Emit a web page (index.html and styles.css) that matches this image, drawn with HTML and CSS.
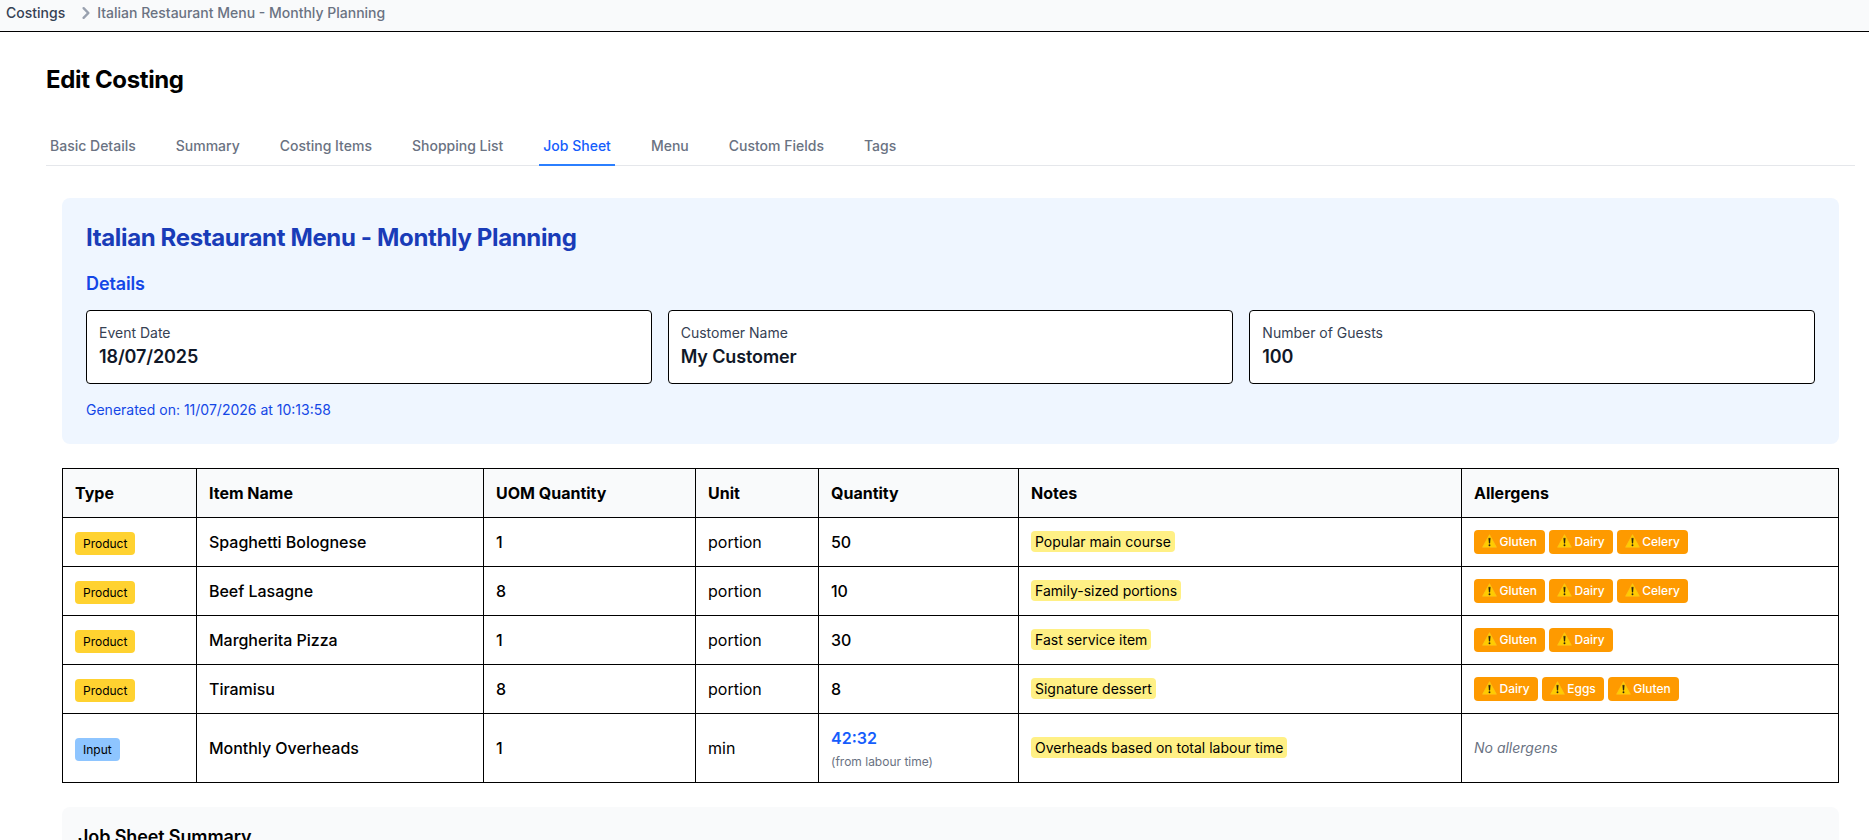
FILE: index.html
```html
<!DOCTYPE html>
<html lang="en">
<head>
    <meta charset="UTF-8">
    <meta name="viewport" content="width=device-width, initial-scale=1.0">
    <title>Edit Costing</title>
    <link rel="stylesheet" href="styles.css">
</head>
<body>
    <svg class="sprite" aria-hidden="true">
        <symbol id="warning" viewBox="0 0 15 14">
            <path d="M7.5 0.6 L14.5 13.3 H0.5 Z" fill="#ffcc00" stroke="#fcc21b" stroke-width="0.6" stroke-linejoin="round"/>
            <path d="M6.7 4.2 H8.3 L7.9 9.2 H7.1 Z" fill="#2b2412" stroke="#2b2412" stroke-width="0.4" stroke-linejoin="round"/>
            <circle cx="7.5" cy="11.2" r="0.95" fill="#2b2412"/>
        </symbol>
    </svg>

    <nav class="breadcrumb">
        <a href="#">Costings</a>
        <svg class="chevron" viewBox="0 0 20 20" fill="currentColor">
            <path fill-rule="evenodd" clip-rule="evenodd" d="M7.293 14.707a1 1 0 010-1.414L10.586 10 7.293 6.707a1 1 0 011.414-1.414l4 4a1 1 0 010 1.414l-4 4a1 1 0 01-1.414 0z"/>
        </svg>
        <span>Italian Restaurant Menu - Monthly Planning</span>
    </nav>

    <main>
        <h1>Edit Costing</h1>

        <div class="tabs">
            <a href="#">Basic Details</a>
            <a href="#">Summary</a>
            <a href="#">Costing Items</a>
            <a href="#">Shopping List</a>
            <a href="#" class="active">Job Sheet</a>
            <a href="#">Menu</a>
            <a href="#">Custom Fields</a>
            <a href="#">Tags</a>
        </div>

        <div class="content">
            <section class="job-header">
                <h2>Italian Restaurant Menu - Monthly Planning</h2>
                <h3>Details</h3>
                <div class="details">
                    <div class="detail-card">
                        <div class="label">Event Date</div>
                        <div class="value">18/07/2025</div>
                    </div>
                    <div class="detail-card">
                        <div class="label">Customer Name</div>
                        <div class="value">My Customer</div>
                    </div>
                    <div class="detail-card">
                        <div class="label">Number of Guests</div>
                        <div class="value">100</div>
                    </div>
                </div>
                <p class="generated">Generated on: 11/07/2026 at 10:13:58</p>
            </section>

            <table>
                <colgroup>
                    <col class="col-type">
                    <col class="col-name">
                    <col class="col-uom">
                    <col class="col-unit">
                    <col class="col-qty">
                    <col class="col-notes">
                    <col class="col-allergens">
                </colgroup>
                <thead>
                    <tr>
                        <th>Type</th>
                        <th>Item Name</th>
                        <th>UOM Quantity</th>
                        <th>Unit</th>
                        <th>Quantity</th>
                        <th>Notes</th>
                        <th>Allergens</th>
                    </tr>
                </thead>
                <tbody>
                    <tr>
                        <td><span class="badge product">Product</span></td>
                        <td class="medium">Spaghetti Bolognese</td>
                        <td class="medium">1</td>
                        <td>portion</td>
                        <td class="medium">50</td>
                        <td><div class="note"><span>Popular main course</span></div></td>
                        <td>
                            <div class="allergens">
                                <span class="allergen"><svg><use href="#warning"/></svg> Gluten</span>
                                <span class="allergen"><svg><use href="#warning"/></svg> Dairy</span>
                                <span class="allergen"><svg><use href="#warning"/></svg> Celery</span>
                            </div>
                        </td>
                    </tr>
                    <tr>
                        <td><span class="badge product">Product</span></td>
                        <td class="medium">Beef Lasagne</td>
                        <td class="medium">8</td>
                        <td>portion</td>
                        <td class="medium">10</td>
                        <td><div class="note"><span>Family-sized portions</span></div></td>
                        <td>
                            <div class="allergens">
                                <span class="allergen"><svg><use href="#warning"/></svg> Gluten</span>
                                <span class="allergen"><svg><use href="#warning"/></svg> Dairy</span>
                                <span class="allergen"><svg><use href="#warning"/></svg> Celery</span>
                            </div>
                        </td>
                    </tr>
                    <tr>
                        <td><span class="badge product">Product</span></td>
                        <td class="medium">Margherita Pizza</td>
                        <td class="medium">1</td>
                        <td>portion</td>
                        <td class="medium">30</td>
                        <td><div class="note"><span>Fast service item</span></div></td>
                        <td>
                            <div class="allergens">
                                <span class="allergen"><svg><use href="#warning"/></svg> Gluten</span>
                                <span class="allergen"><svg><use href="#warning"/></svg> Dairy</span>
                            </div>
                        </td>
                    </tr>
                    <tr>
                        <td><span class="badge product">Product</span></td>
                        <td class="medium">Tiramisu</td>
                        <td class="medium">8</td>
                        <td>portion</td>
                        <td class="medium">8</td>
                        <td><div class="note"><span>Signature dessert</span></div></td>
                        <td>
                            <div class="allergens">
                                <span class="allergen"><svg><use href="#warning"/></svg> Dairy</span>
                                <span class="allergen"><svg><use href="#warning"/></svg> Eggs</span>
                                <span class="allergen"><svg><use href="#warning"/></svg> Gluten</span>
                            </div>
                        </td>
                    </tr>
                    <tr>
                        <td><span class="badge input">Input</span></td>
                        <td class="medium">Monthly Overheads</td>
                        <td class="medium">1</td>
                        <td>min</td>
                        <td>
                            <div class="labour">42:32</div>
                            <div class="labour-hint">(from labour time)</div>
                        </td>
                        <td><div class="note"><span>Overheads based on total labour time</span></div></td>
                        <td><div class="no-allergens">No allergens</div></td>
                    </tr>
                </tbody>
            </table>

            <section class="summary">
                <h3>Job Sheet Summary</h3>
            </section>
        </div>
    </main>
</body>
</html>
```

FILE: styles.css
```css
* {
    box-sizing: border-box;
}

body {
    margin: 0;
    height: 100vh;
    overflow: hidden;
    font-family: Inter, "Liberation Sans", sans-serif;
    font-size: 16px;
    line-height: 24px;
    color: #000;
    background-color: #fff;
}

h1, h2, h3, p {
    margin: 0;
}

a {
    color: inherit;
    text-decoration: none;
}

.sprite {
    display: none;
}

/* Breadcrumb */
.breadcrumb {
    display: flex;
    align-items: center;
    height: 32px;
    padding: 0 6px 5px;
    background-color: #f9fafb;
    border-bottom: 1px solid #000;
    font-size: 14px;
    font-weight: 500;
    line-height: 20px;
    color: #6a7282;
}

.breadcrumb a {
    color: #364153;
}

.chevron {
    width: 24px;
    height: 24px;
    margin: 0 -1px 0 9px;
    color: #99a1af;
}

main {
    padding: 32px 14px 0 46px;
}

h1 {
    font-size: 24px;
    font-weight: 700;
    line-height: 32px;
    letter-spacing: -0.36px;
}

/* Tabs */
.tabs {
    display: flex;
    gap: 32px;
    margin-top: 24px;
    border-bottom: 1px solid #e5e7eb;
}

.tabs a {
    margin-bottom: -1px;
    padding: 16px 4px 8px;
    border-bottom: 2px solid transparent;
    font-size: 14px;
    font-weight: 500;
    line-height: 20px;
    color: #6a7282;
}

.tabs a.active {
    border-bottom-color: #2b7fff;
    color: #155dfc;
}

.content {
    padding: 32px 16px 0;
}

/* Job sheet header */
.job-header {
    padding: 24px;
    margin-bottom: 24px;
    background-color: #eff6ff;
    border-radius: 8px;
}

.job-header h2 {
    margin-bottom: 16px;
    font-size: 24px;
    font-weight: 700;
    line-height: 32px;
    letter-spacing: -0.36px;
    color: #193cb8;
}

.job-header h3 {
    margin-bottom: 12px;
    font-size: 18px;
    font-weight: 600;
    line-height: 28px;
    letter-spacing: -0.12px;
    color: #1447e6;
}

.details {
    display: grid;
    grid-template-columns: repeat(3, 1fr);
    gap: 16px;
}

.detail-card {
    padding: 12px;
    background-color: #fff;
    border: 1px solid #000;
    border-radius: 4px;
}

.label {
    font-size: 14px;
    line-height: 20px;
    color: #364153;
}

.value {
    font-size: 18px;
    font-weight: 600;
    line-height: 28px;
    letter-spacing: -0.12px;
    color: #101828;
}

.generated {
    margin-top: 16px;
    font-size: 14px;
    line-height: 20px;
    color: #1447e6;
}

/* Items table */
table {
    width: 100%;
    table-layout: fixed;
    border-collapse: collapse;
}

.col-type { width: 134px; }
.col-name { width: 287px; }
.col-uom { width: 212px; }
.col-unit { width: 123px; }
.col-qty { width: 200px; }
.col-notes { width: 443px; }

th, td {
    padding: 12px;
    border: 1px solid #000;
    text-align: left;
    vertical-align: middle;
}

th {
    background-color: #f9fafb;
    font-weight: 700;
}

.medium {
    font-weight: 500;
    letter-spacing: -0.03px;
}

.badge {
    padding: 4px 8px;
    border-radius: 4px;
    font-size: 12px;
    line-height: 16px;
}

.badge.product {
    background-color: #ffd230;
}

.badge.input {
    background-color: #8ec5ff;
}

.note {
    font-size: 14px;
    line-height: 20px;
}

.note span {
    padding: 2px 4px;
    background-color: #fff085;
    border-radius: 4px;
}

.allergens {
    display: flex;
    flex-wrap: wrap;
    gap: 4px;
}

.allergen {
    padding: 4px 8px;
    background-color: #fe9a00;
    border-radius: 4px;
    font-size: 12px;
    font-weight: 500;
    line-height: 16px;
    color: #fff;
}

.allergen svg {
    display: inline-block;
    width: 15px;
    height: 14px;
    margin-right: -0.7px;
    vertical-align: -2px;
}

.labour {
    font-weight: 600;
    color: #155dfc;
}

.labour-hint {
    margin-top: 4px;
    font-size: 12px;
    line-height: 16px;
    color: #6a7282;
}

.no-allergens {
    font-size: 14px;
    font-style: italic;
    line-height: 20px;
    color: #6a7282;
}

/* Summary */
.summary {
    margin-top: 24px;
    padding: 16px;
    background-color: #f9fafb;
    border-radius: 8px;
}

.summary h3 {
    font-size: 18px;
    font-weight: 600;
    line-height: 28px;
    letter-spacing: -0.12px;
}
```
